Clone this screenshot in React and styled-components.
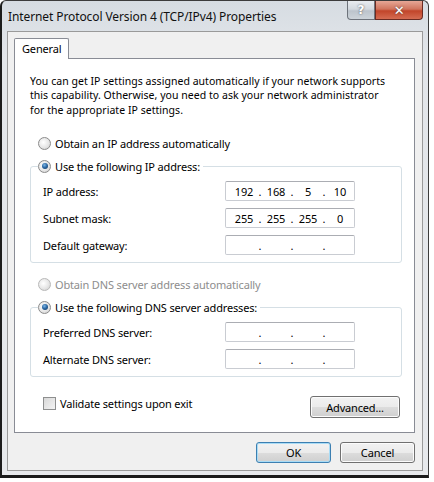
import React from 'react'
import styled, { createGlobalStyle } from 'styled-components'

const GlobalStyle = createGlobalStyle`
  body {
    margin: 0;
    background: #ffffff;
    font-family: "Noto Sans", "Open Sans", sans-serif;
    font-size: 11px;
    letter-spacing: -0.16px;
    color: #000;
  }
`

const Window = styled.div`
  width: 429px;
  height: 478px;
  border: 1px solid #3c3c3c;
  border-left: 2px solid #1c1c1c;
  border-bottom: 3px solid #1a1a1a;
  border-radius: 6px 6px 0 0;
  background: linear-gradient(180deg, #d6dce2 0%, #e3e6ea 12%, #e7e9ec 100%);
  display: flex;
  flex-direction: column;
  box-sizing: border-box;
`

const TitleBar = styled.div`
  height: 30px;
  flex-shrink: 0;
  display: flex;
  align-items: flex-start;
  padding-left: 6px;
`

const Title = styled.div`
  flex: 1;
  font-size: 12px;
  letter-spacing: -0.1px;
  margin-top: 7px;
  color: #111;
`

const CaptionButtons = styled.div`
  display: flex;
  margin-right: 5px;
`

const CaptionButton = styled.div`
  width: ${p => p.w}px;
  height: 19px;
  box-sizing: border-box;
  border: 1px solid ${p => (p.close ? '#6b2b22' : '#6d737b')};
  border-top: none;
  border-radius: ${p => (p.close ? '0 0 4px 0' : '0 0 0 4px')};
  background: ${p =>
    p.close
      ? 'linear-gradient(180deg, #e6a796 0%, #d0755e 45%, #c2452a 55%, #d56c52 100%)'
      : 'linear-gradient(180deg, #e8ecf0 0%, #d3d9df 45%, #bcc4cc 55%, #cdd4da 100%)'};
  display: flex;
  align-items: center;
  justify-content: center;
  color: #fff;
  font-family: "DejaVu Sans", sans-serif;
  font-weight: bold;
  font-size: ${p => (p.close ? 13 : 12)}px;
  text-shadow: 0 0 2px #444;
`

const Client = styled.div`
  flex: 1;
  margin: 0 5px 4px 5px;
  border: 1px solid #9a9a9a;
  background: #f0f0f0;
  padding: 6px 7px 7px 6px;
  display: flex;
  flex-direction: column;
`

const TabStrip = styled.div`
  display: flex;
  position: relative;
  z-index: 1;
`

const Tab = styled.div`
  height: 19px;
  padding: 0 7px 1px;
  background: #fff;
  border: 1px solid #898c95;
  border-bottom: none;
  border-radius: 2px 2px 0 0;
  display: flex;
  align-items: center;
  margin-bottom: -1px;
`

const Panel = styled.div`
  background: #fff;
  border: 1px solid #898c95;
  height: 375px;
  flex-shrink: 0;
  box-sizing: border-box;
  padding: 15px 12px 0 15px;
  display: flex;
  flex-direction: column;
`

const Intro = styled.p`
  margin: 0 0 19px;
  font-size: 10.5px;
  letter-spacing: 0.04px;
  line-height: 14.4px;
  white-space: nowrap;
`

const RadioRow = styled.label`
  display: flex;
  align-items: center;
  gap: 4px;
  height: 14px;
  margin-left: 8px;
  margin-bottom: ${p => p.after || 0}px;
  color: ${p => (p.disabled ? '#8d8d8d' : '#000')};
`

const Radio = styled.span`
  width: 11px;
  height: 11px;
  border-radius: 50%;
  border: 1px solid ${p => (p.disabled ? '#b8b8b8' : '#8b8b8b')};
  background: radial-gradient(circle at 40% 40%, #ffffff 0%, #e6e6e6 55%, #c9c9c9 100%);
  display: flex;
  align-items: center;
  justify-content: center;
  flex-shrink: 0;
  &::after {
    content: '';
    display: ${p => (p.checked ? 'block' : 'none')};
    width: 6px;
    height: 6px;
    border-radius: 50%;
    background: radial-gradient(circle at 40% 35%, #7fb6e6 0%, #2d6ba6 45%, #0f2f55 100%);
  }
`

const Group = styled.fieldset`
  margin: 0 0 ${p => p.after || 0}px;
  padding: 8px 0 7px 12px;
  border: 1px solid #d5dfe5;
  border-radius: 3px;
  display: flex;
  flex-direction: column;
  gap: 7px;
`

const Legend = styled.legend`
  padding: 0 3px 0 0;
  margin-left: -5px;
  background: #fff;
  & > label {
    margin-left: 0;
  }
`

const FieldRow = styled.div`
  display: grid;
  grid-template-columns: 182px 130px;
  align-items: center;
`

const IpBox = styled.div`
  height: 20px;
  box-sizing: border-box;
  border: 1px solid #c9ccd2;
  border-top-color: #abadb3;
  border-radius: 2px;
  display: flex;
  align-items: center;
  padding-left: 6px;
`

const Octet = styled.span`
  width: 24px;
  text-align: center;
`

const Dot = styled.span`
  width: 8px;
  text-align: center;
`

const Footer = styled.div`
  display: flex;
  align-items: center;
  justify-content: space-between;
  padding-right: 2px;
  margin-top: 19px;
`

const CheckRow = styled.label`
  display: flex;
  align-items: center;
  gap: 4px;
  margin-left: 13px;
  margin-top: -7px;
`

const Checkbox = styled.span`
  width: 11px;
  height: 11px;
  border: 1px solid #8e8f8f;
  background: linear-gradient(135deg, #d8d8d8 0%, #f4f4f4 100%);
`

const Button = styled.div`
  width: ${p => p.w}px;
  height: ${p => p.h || 21}px;
  box-sizing: border-box;
  border: 1px solid ${p => (p.primary ? '#3c7fb1' : '#707070')};
  border-radius: 3px;
  background: linear-gradient(180deg, #f2f2f2 0%, #ebebeb 50%, #dddddd 50%, #cfcfcf 100%);
  box-shadow: inset 0 0 0 1px ${p => (p.primary ? '#a9dcf6' : '#fcfcfc')};
  display: flex;
  align-items: center;
  justify-content: center;
`

const ButtonBar = styled.div`
  display: flex;
  justify-content: flex-end;
  gap: 9px;
  margin-top: 9px;
`

const IpField = ({ value }) => {
  const parts = value ? value.split('.') : ['', '', '', '']
  return (
    <IpBox>
      {parts.map((p, i) => (
        <React.Fragment key={i}>
          <Octet>{p}</Octet>
          {i < 3 && <Dot>.</Dot>}
        </React.Fragment>
      ))}
    </IpBox>
  )
}

const RadioOption = ({ checked, disabled, after, children }) => (
  <RadioRow disabled={disabled} after={after}>
    <Radio checked={checked} disabled={disabled} />
    {children}
  </RadioRow>
)

export default function App() {
  return (
    <>
      <GlobalStyle />
      <Window>
        <TitleBar>
          <Title>Internet Protocol Version 4 (TCP/IPv4) Properties</Title>
          <CaptionButtons>
            <CaptionButton w={28}>?</CaptionButton>
            <CaptionButton w={48} close>✕</CaptionButton>
          </CaptionButtons>
        </TitleBar>
        <Client>
          <TabStrip>
            <Tab>General</Tab>
          </TabStrip>
          <Panel>
            <Intro>
              You can get IP settings assigned automatically if your network supports<br />
              this capability. Otherwise, you need to ask your network administrator<br />
              for the appropriate IP settings.
            </Intro>
            <RadioOption after={9}>Obtain an IP address automatically</RadioOption>
            <Group after={14}>
              <Legend>
                <RadioOption checked>Use the following IP address:</RadioOption>
              </Legend>
              <FieldRow>
                <span>IP address:</span>
                <IpField value="192.168.5.10" />
              </FieldRow>
              <FieldRow>
                <span>Subnet mask:</span>
                <IpField value="255.255.255.0" />
              </FieldRow>
              <FieldRow>
                <span>Default gateway:</span>
                <IpField />
              </FieldRow>
            </Group>
            <RadioOption disabled after={9}>Obtain DNS server address automatically</RadioOption>
            <Group>
              <Legend>
                <RadioOption checked>Use the following DNS server addresses:</RadioOption>
              </Legend>
              <FieldRow>
                <span>Preferred DNS server:</span>
                <IpField />
              </FieldRow>
              <FieldRow>
                <span>Alternate DNS server:</span>
                <IpField />
              </FieldRow>
            </Group>
            <Footer>
              <CheckRow>
                <Checkbox />
                Validate settings upon exit
              </CheckRow>
              <Button w={90} h={22}>Advanced...</Button>
            </Footer>
          </Panel>
          <ButtonBar>
            <Button w={75} primary>OK</Button>
            <Button w={75}>Cancel</Button>
          </ButtonBar>
        </Client>
      </Window>
    </>
  )
}
